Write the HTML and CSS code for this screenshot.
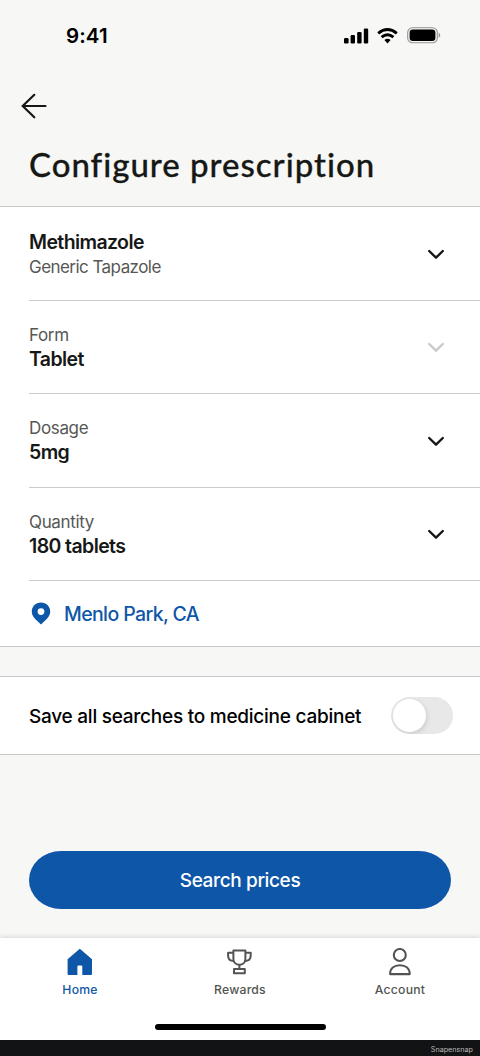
FILE: index.html
```html
<!DOCTYPE html>
<html lang="en">
<head>
<meta charset="utf-8">
<title>Configure prescription</title>
<link rel="stylesheet" href="styles.css">
</head>
<body>
<div class="screen">
  <div class="status">
    <span class="time">9:41</span>
    <div class="indicators">
      <svg class="signal" width="25" height="16" viewBox="0 0 25 16"><rect x="0" y="10" width="4.600" height="5.500" rx="1.300"/><rect x="6.600" y="7" width="4.400" height="8.500" rx="1.300"/><rect x="13.200" y="4" width="4.400" height="11.500" rx="1.300"/><rect x="19.800" y="0.500" width="4.400" height="15" rx="1.300"/></svg>
      <svg class="wifi" width="21" height="16" viewBox="0 0 21 16"><g fill="none" stroke="#000" stroke-width="2.900"><path d="M1.200 5.400Q10.500-2.200 19.800 5.400"/><path d="M4.600 9.100Q10.500 4.200 16.400 9.100"/></g><path d="M7.400 12Q10.500 9.600 13.600 12L10.500 15.400Z"/></svg>
      <svg class="battery" width="34" height="17" viewBox="0 0 34 17"><rect x=".7" y=".7" width="29.600" height="15" rx="4.800" fill="none" stroke="#929292" stroke-width="1.100"/><rect x="2.600" y="2.500" width="25.800" height="11.400" rx="3.200"/><path d="M31.700 5.700Q33.200 6.300 33.200 8.200T31.700 10.700Z" fill="#929292"/></svg>
    </div>
  </div>
  <header class="header">
    <svg class="back" width="28" height="28" viewBox="0 0 28 28"><path d="M25.500 14H2.500M14.300 2.800 2.700 14 14.300 25.300"/></svg>
    <h1>Configure prescription</h1>
  </header>
  <main>
    <section class="panel">
      <div class="row drug"><div class="copy"><strong>Methimazole</strong><span>Generic Tapazole</span></div><svg class="chevron" width="18" height="12" viewBox="0 0 18 12"><path d="M2.200 2 9 8.700 15.800 2"/></svg></div>
      <div class="row"><div class="copy"><span>Form</span><strong>Tablet</strong></div><svg class="chevron disabled" width="18" height="12" viewBox="0 0 18 12"><path d="M2.200 2 9 8.700 15.800 2"/></svg></div>
      <div class="row"><div class="copy"><span>Dosage</span><strong>5mg</strong></div><svg class="chevron" width="18" height="12" viewBox="0 0 18 12"><path d="M2.200 2 9 8.700 15.800 2"/></svg></div>
      <div class="row"><div class="copy"><span>Quantity</span><strong>180 tablets</strong></div><svg class="chevron" width="18" height="12" viewBox="0 0 18 12"><path d="M2.200 2 9 8.700 15.800 2"/></svg></div>
      <div class="location"><svg width="20" height="23" viewBox="0 0 20 23"><path fill-rule="evenodd" d="M10 .5C4.700.500.800 4.400.800 9.400.800 14.300 4 16.700 10 22.500 16 16.700 19.200 14.300 19.200 9.400 19.200 4.400 15.300.500 10 .500ZM10 6.200a3.400 3.400 0 1 1 0 6.800 3.400 3.400 0 0 1 0-6.800Z"/></svg><span>Menlo Park, CA</span></div>
    </section>
    <section class="save"><span>Save all searches to medicine cabinet</span><div class="toggle"><i></i></div></section>
    <button class="search">Search prices</button>
  </main>
  <nav class="tabs">
    <div class="tab active"><svg width="28" height="28" viewBox="0 0 28 28"><path fill="currentColor" d="M13.800 .8 26 11.200V26q0 1-1 1H16.300V18.500q0-1-1-1H12.400q-1 0-1 1V27H2.600q-1 0-1-1V11.200Z"/></svg><span>Home</span></div>
    <div class="tab"><svg width="28" height="28" viewBox="0 0 28 28"><g fill="none" stroke="currentColor" stroke-width="2" stroke-linejoin="round"><path d="M7.400 2.500H19.400V10.700C19.400 14.200 16.800 16.700 13.400 16.700S7.400 14.200 7.400 10.700Z"/><path d="M7.400 4.800H2.100V7.800C2.100 11.400 4.200 13 8 13M19.400 4.800H24.700V7.800C24.700 11.400 22.600 13 18.800 13M13.400 16.700V21M8 21H18.800V25.200H8Z"/></g></svg><span>Rewards</span></div>
    <div class="tab"><svg width="28" height="28" viewBox="0 0 28 28"><g fill="none" stroke="currentColor" stroke-width="2.100" stroke-linejoin="round"><circle cx="13.800" cy="7" r="6"/><path d="M4.100 26.100C4.100 20.500 8 17.300 13.900 17.300S23.700 20.500 23.700 26.100Z"/></g></svg><span>Account</span></div>
    <div class="home-indicator"></div>
  </nav>
  <footer>Snapensnap</footer>
</div>
</body>
</html>
```
FILE: styles.css
```css
* { box-sizing: border-box; }
body { margin: 0; font-family: Inter, sans-serif; background: #f7f7f5; color: #161816; }
.screen { width: 480px; height: 1056px; display: flex; flex-direction: column; overflow: hidden; }
svg { display: block; flex: none; }
.status { height: 72px; display: flex; justify-content: space-between; align-items: center; padding: 0 39px 0 66px; color: #000; }
.time { font-size: 20.500px; font-weight: 600; line-height: 24px; letter-spacing: .1px; }
.indicators { display: flex; align-items: center; padding-bottom: 1px; }
.wifi { margin-left: 8px; }
.battery { margin-left: 9px; }
.header { height: 135px; padding: 20px 29px 0 20px; border-bottom: 1px solid #c8c9c6; }
.back { fill: none; stroke: #161816; stroke-width: 2.200; stroke-linecap: round; stroke-linejoin: round; }
h1 { margin: 22px 0 0 9px; font: 500 33px/44px Lato, sans-serif; letter-spacing: .980px; white-space: nowrap; -webkit-text-stroke: .3px #161816; }
.panel { height: 440px; background: #fff; border-bottom: 1px solid #c8c8c8; }
.row { height: 93.500px; margin-left: 29px; padding-right: 35px; border-bottom: 1px solid #cbcbcb; display: flex; align-items: center; justify-content: space-between; }
.copy { display: flex; flex-direction: column; padding-top: 1px; }
.copy strong { font-size: 19.500px; line-height: 25px; font-weight: 600; letter-spacing: -.6px; }
.copy span { font-size: 17px; line-height: 24px; letter-spacing: -.350px; color: #565856; }
.drug .copy { padding-top: 2px; }
.drug .copy strong { letter-spacing: -.6px; }
.drug .copy span { letter-spacing: -.550px; }
.chevron { margin-top: 3px; fill: none; stroke: #161816; stroke-width: 2.400; stroke-linecap: round; stroke-linejoin: round; }
.chevron.disabled { stroke: #c9c9c9; }
.location { height: 65px; margin-left: 31px; display: flex; align-items: center; gap: 13px; color: #0e56a7; font-size: 19.500px; font-weight: 500; letter-spacing: -.620px; }
.location svg { fill: #0e56a7; }
.save { height: 79px; margin-top: 29px; padding: 0 27px 0 29px; display: flex; align-items: center; justify-content: space-between; background: #fff; border-top: 1px solid #c8c8c8; border-bottom: 1px solid #c8c8c8; color: #000; font-size: 19px; font-weight: 500; letter-spacing: -.250px; white-space: nowrap; }
.save span { padding-top: 2px; }
.toggle { width: 62px; height: 37px; padding: 2px; border-radius: 20px; background: #e8e8e8; overflow: hidden; }
.toggle i { display: block; width: 33px; height: 33px; border-radius: 50%; background: #fff; box-shadow: 1px 2px 5px #0002; }
.search { display: block; width: 422px; height: 58px; margin: 96px 29px 0; padding: 2px 0 0; border: 0; border-radius: 32px / 29px; background: #0e56a7; color: #fff; font: 500 19px/24px Inter, sans-serif; letter-spacing: -.370px; }
.tabs { flex: none; height: 102px; margin-top: auto; display: grid; grid-template-columns: repeat(3, 1fr); grid-template-rows: 82px 20px; background: #fff; box-shadow: 0 -1px 5px #0002; }
.tab { display: flex; flex-direction: column; align-items: center; padding-top: 10px; gap: 5px; color: #525452; font-size: 12.200px; line-height: 17px; font-weight: 500; letter-spacing: .220px; }
.active { color: #0e56a7; }
.home-indicator { grid-column: 1 / -1; justify-self: center; width: 171px; height: 6px; margin-top: 4px; border-radius: 3px; background: #000; }
footer { flex: none; height: 16px; padding-right: 7px; background: #121314; color: #bcbcbc; font-size: 7.200px; line-height: 19px; text-align: right; }
```
